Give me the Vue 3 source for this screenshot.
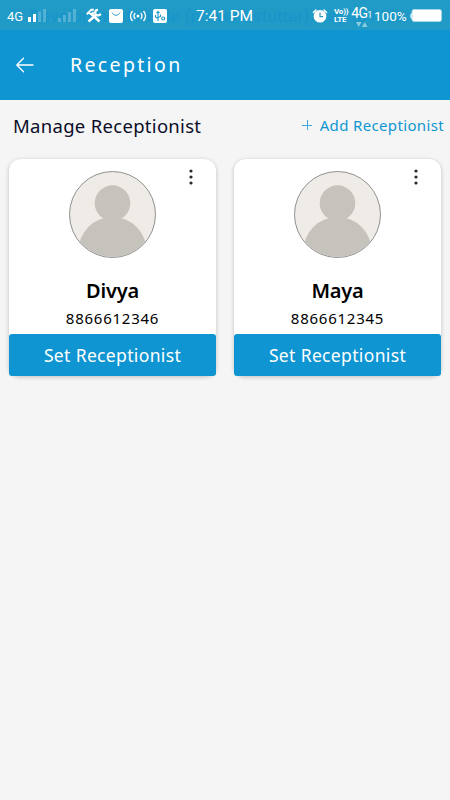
<script setup>
const people = [
  { name: 'Divya', phone: '8866612346' },
  { name: 'Maya', phone: '8866612345' },
]
</script>

<template>
  <main class="screen">
    <header class="top">
      <div class="status">
        <span class="ghost">Development mode (prevent stutter). Tap to hide.</span>
        <span class="net">4G</span>
        <svg class="signals" width="50" height="16" viewBox="0 0 50 16">
          <g fill="#fff"><rect x="0" y="9" width="3" height="5" /><rect x="5" y="6" width="3" height="8" /></g>
          <g fill="#fff" opacity=".24"><rect x="10" y="3.500" width="3" height="10.500" /><rect x="15" y="1" width="3" height="13" /><rect x="30" y="10" width="3" height="4" /><rect x="35" y="7" width="3" height="7" /><rect x="40" y="4" width="3" height="10" /><rect x="45" y="1" width="3" height="13" /></g>
        </svg>
        <svg class="tools" width="16" height="16" viewBox="0 0 16 16" fill="none" stroke="#fff">
          <path d="M5 5.500l8.500 8M2.500 13.500L10 7" stroke-width="2.600" />
          <path d="M.8 6.200l4.500-4.400h2.500M2.500 4.500l3 2 2.200-2.200" stroke-width="2" />
          <path d="M12 1.800a2.800 2.800 0 1 0 2.600 3.800" stroke-width="2.200" />
        </svg>
        <svg class="bag" width="14" height="14" viewBox="0 0 14 14">
          <rect width="14" height="14" rx="2" fill="#fff" /><path d="M3 3.500c1.500 3.600 6.500 3.600 8 0" fill="none" stroke="#249bc7" />
        </svg>
        <svg class="cast" width="18" height="14" viewBox="0 0 18 14" fill="none" stroke="#fff" stroke-width="1.300">
          <circle cx="9" cy="7" r="1.500" fill="#fff" stroke="none" />
          <path d="M3.500 2Q-.5 7 3.500 12M6.300 4Q3.600 7 6.300 10M14.500 2q4 5 0 10M11.700 4q2.700 3 0 6" />
        </svg>
        <svg class="usb" width="14" height="14" viewBox="0 0 14 14">
          <rect width="14" height="14" rx="2" fill="#fff" />
          <g fill="none" stroke="#249bc7" stroke-width="1.100"><path d="M5 3v9M2.500 6v2L5 9.500M3.500 4L5 2.500 6.500 4M7.500 5.500v2L5 8.500" /><circle cx="10.200" cy="9.500" r="1.500" /></g>
        </svg>
        <time class="clock">7:41 PM</time>
        <svg class="alarm" width="16" height="16" viewBox="0 0 16 16">
          <path d="M1.500 4.300l2.500-2.300M14.500 4.300l-2.500-2.300" stroke="#fff" stroke-width="1.600" stroke-linecap="round" />
          <circle cx="8" cy="8.300" r="6.300" fill="#fff" /><path d="M8 4.700v4h3" fill="none" stroke="#249bc7" stroke-width="1.200" />
        </svg>
        <span class="volte"><span>Vo))</span><span>LTE</span></span>
        <span class="mobile">
          <span class="gen">4G<small>1</small></span>
          <svg width="12" height="5" viewBox="0 0 12 5" fill="#8ccbe2"><path d="M0 0h5.500L2.800 5zM6 5h5.500L8.800 0z" /></svg>
        </span>
        <span class="percent">100%</span>
        <svg class="battery" width="33" height="16" viewBox="0 0 33 16">
          <path d="M2 5Q.4 5 .4 8T2 11z" fill="#fff" /><rect x="2" y="1.500" width="29.500" height="12" rx="2" fill="#fff" stroke="#a6d6e8" />
        </svg>
      </div>
      <nav class="bar">
        <svg width="19" height="16" viewBox="0 0 19 16" fill="none" stroke="#fff" stroke-width="1.300" stroke-linecap="round" stroke-linejoin="round"><path d="M7.500 1.200L.8 8l6.700 6.800M1 8h16" /></svg>
        <h1>Reception</h1>
      </nav>
    </header>

    <section class="heading">
      <h2>Manage Receptionist</h2>
      <a class="add">
        <svg width="10" height="10" viewBox="0 0 10 10" stroke="#3fa8d9"><path d="M0 5.500h10M5.500 0v10" /></svg>
        <span>Add Receptionist</span>
      </a>
    </section>

    <section class="cards">
      <article v-for="p in people" :key="p.name" class="card">
        <svg class="more" width="4" height="16" viewBox="0 0 4 16" fill="#292929"><circle cx="2" cy="2" r="1.600" /><circle cx="2" cy="8" r="1.600" /><circle cx="2" cy="14" r="1.600" /></svg>
        <div class="avatar">
          <svg width="85" height="85" viewBox="0 0 86 86" fill="#c6c3bd"><circle cx="43" cy="31.500" r="18" /><circle cx="43" cy="80" r="34.500" /></svg>
        </div>
        <h3>{{ p.name }}</h3>
        <p>{{ p.phone }}</p>
        <button>Set Receptionist</button>
      </article>
    </section>
  </main>
</template>

<style>
body { background: #f5f5f5; }
</style>

<style scoped>
* { box-sizing: border-box; }
.screen { width: 450px; height: 800px; background: #f5f5f5; font-family: "Noto Sans", sans-serif; overflow: hidden; }
h1, h2, h3, p { margin: 0; font-weight: 400; white-space: nowrap; }
svg { display: block; flex: none; }
.top { height: 100px; background: #0f95d2; }
.status { position: relative; display: flex; align-items: center; height: 30px; padding: 2px 7px 0; background: #209ac6; color: #fff; font-family: Roboto, sans-serif; white-space: nowrap; overflow: hidden; }
.ghost { position: absolute; left: 30px; top: 5px; font-size: 17px; line-height: 22px; letter-spacing: .2px; color: #1795cb; }
.status > :not(.ghost) { position: relative; flex: none; }
.net { width: 21px; font-size: 13px; line-height: 16px; padding-top: 1px; }
.signals { margin-right: 8px; }
.tools { margin-right: 7px; }
.bag { margin-right: 6px; }
.cast { margin-right: 6px; }
.usb { margin-right: 29px; }
.clock { width: 60px; margin-right: 56px; font-size: 15.500px; }
.alarm { margin-right: 6px; }
.volte { display: flex; flex-direction: column; width: 17px; font-size: 8px; line-height: 8px; font-weight: 700; letter-spacing: -.2px; }
.mobile { display: flex; flex-direction: column; align-items: center; width: 21px; margin-right: 2px; }
.gen { font-size: 14px; line-height: 14px; letter-spacing: -.7px; }
.gen small { font-size: 9px; }
.percent { width: 36px; font-size: 13.500px; }
.bar { display: flex; align-items: center; height: 70px; padding: 0 16px; color: #fff; }
.bar h1 { margin: -2px 0 0 35px; font-size: 19.500px; letter-spacing: 2.350px; }
.heading { display: flex; justify-content: space-between; align-items: center; height: 52px; padding: 0 6px 2px 13px; }
.heading h2 { font-size: 18.500px; color: #0b0e29; letter-spacing: .3px; }
.add { display: flex; align-items: center; gap: 8px; color: #0f95d2; font-size: 15px; letter-spacing: .35px; }
.cards { display: grid; grid-template-columns: 207px 207px; gap: 18px; padding: 7px 9px; }
.card { position: relative; display: flex; flex-direction: column; align-items: center; height: 217px; background: #fff; border-radius: 12px 12px 10px 10px; box-shadow: 0 1px 4px rgba(0,0,0,.23); }
.more { position: absolute; right: 23px; top: 10px; }
.avatar { width: 87px; height: 87px; margin-top: 12px; border: 1px solid #909090; border-radius: 50%; overflow: hidden; background: #efece8; }
.card h3 { margin-top: 18px; height: 29px; line-height: 29px; font-size: 20px; font-weight: 600; color: #000; letter-spacing: -.2px; }
.card p { height: 28px; padding-top: 2px; line-height: 22px; font-size: 15px; color: #000; letter-spacing: .75px; }
.card button { width: 207px; height: 42px; margin-top: auto; padding: 0; border: 0; border-radius: 3px; background: #0f95d2; color: #fff; font: 400 17.500px/42px "Noto Sans", sans-serif; letter-spacing: .35px; }
</style>
